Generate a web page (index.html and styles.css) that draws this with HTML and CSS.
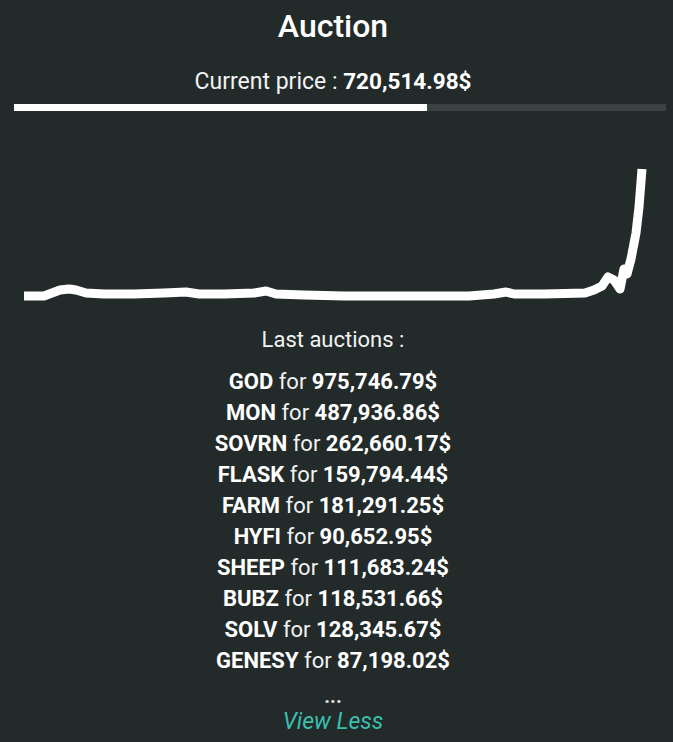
FILE: index.html
```html
<!DOCTYPE html>
<html lang="en">
  <head>
    <meta charset="UTF-8" />
    <meta name="viewport" content="width=device-width, initial-scale=1.0" />
    <title>Auction</title>
    <link rel="stylesheet" href="styles.css">
  </head>
  <body>
    <div class="auction">
      <h1>Auction</h1>
      <p class="price">Current price : <b>720,514.98$</b></p>
      <div class="progress">
        <div class="progress-fill" style="width: 63.3%"></div>
      </div>

      <svg class="chart" width="652" height="180" viewBox="0 0 652 180">
        <polyline
          fill="none"
          stroke="#ffffff"
          stroke-width="9"
          stroke-linejoin="round"
          points="10,167 30,167 38,164 46,161 55,160 62,161 72,164 90,165 120,165 150,164 172,163 185,165 210,165 240,164 252,162 262,165 290,166 330,167 400,167 455,167 480,165 492,163 500,165 530,165 571,164 580,161 588,157 594,148 600,151 606,160 610,140 613,145 617,130 622,104 625,78 628,40"
        />
      </svg>

      <h2>Last auctions :</h2>
      <ul class="sales">
        <li><b>GOD</b> for <b>975,746.79$</b></li>
        <li><b>MON</b> for <b>487,936.86$</b></li>
        <li><b>SOVRN</b> for <b>262,660.17$</b></li>
        <li><b>FLASK</b> for <b>159,794.44$</b></li>
        <li><b>FARM</b> for <b>181,291.25$</b></li>
        <li><b>HYFI</b> for <b>90,652.95$</b></li>
        <li><b>SHEEP</b> for <b>111,683.24$</b></li>
        <li><b>BUBZ</b> for <b>118,531.66$</b></li>
        <li><b>SOLV</b> for <b>128,345.67$</b></li>
        <li><b>GENESY</b> for <b>87,198.02$</b></li>
      </ul>
      <div class="more">...</div>
      <a class="toggle" href="#">View Less</a>
    </div>
  </body>
</html>
```

FILE: styles.css
```css
body {
  margin: 0;
  background-color: #232a2a;
  font-family: Roboto, "Liberation Sans", sans-serif;
  color: #f2f2f2;
}

.auction {
  padding: 7px 21px 0 14px;
  text-align: center;
}

h1 {
  margin: 0;
  font-size: 32px;
  line-height: 38px;
  font-weight: 500;
  color: #ffffff;
}

.price {
  margin: 23px 0 0;
  font-size: 23px;
  line-height: 26px;
}

.price b {
  font-size: 22.5px;
}

.price b,
.sales b {
  color: #ffffff;
  font-weight: 700;
}

.progress {
  margin: 9px -14px 0 0;
  height: 7px;
  background-color: #3b4342;
}

.progress-fill {
  height: 100%;
  background-color: #ffffff;
}

.chart {
  display: block;
  margin-top: 18px;
}

h2 {
  margin: 18px 0 0;
  font-size: 22px;
  line-height: 26px;
  font-weight: 400;
}

.sales {
  list-style: none;
  margin: 13px 0 0;
  padding: 0;
  font-size: 22px;
  line-height: 31px;
}

.sales li {
  height: 31px;
}

.more {
  margin-top: 8px;
  font-size: 20px;
  line-height: 24px;
  font-weight: 700;
  color: #e6e6e6;
}

.toggle {
  display: inline-block;
  margin-top: 1px;
  font-size: 23px;
  line-height: 26px;
  font-style: italic;
  color: #3bbfae;
  text-decoration: none;
}
```
